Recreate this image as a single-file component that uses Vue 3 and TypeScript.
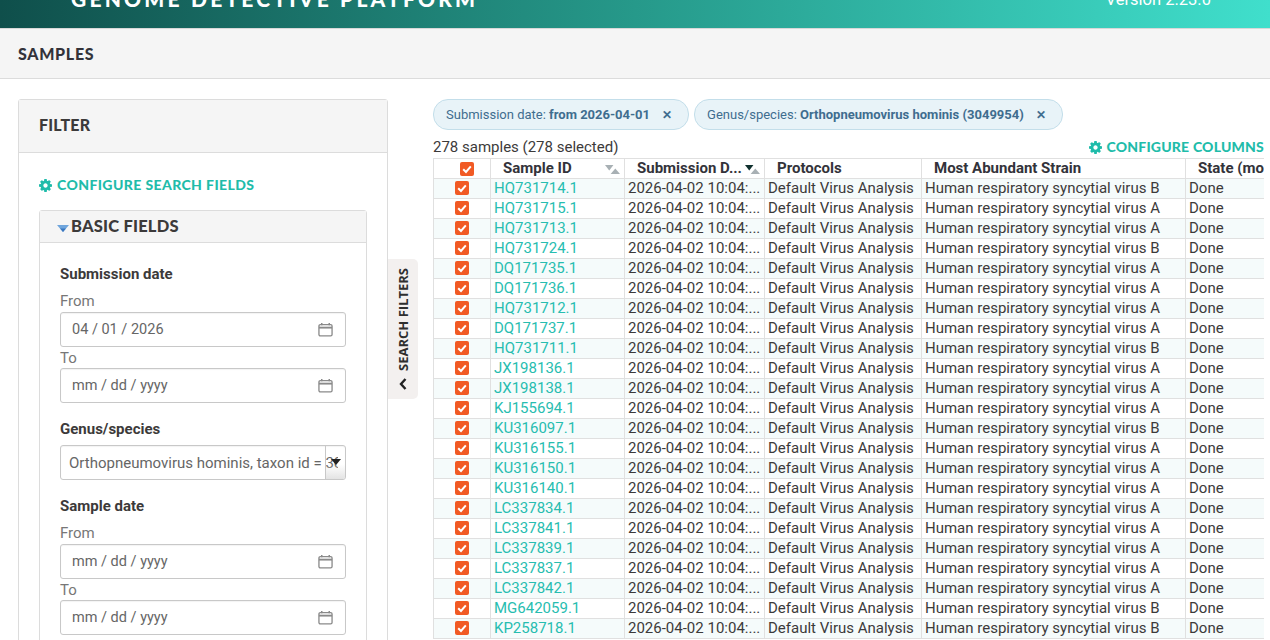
<script setup lang="ts">
interface Row { id: string; strain: string }
const raw: [string, string][] = [
  ['HQ731714.1','B'],['HQ731715.1','A'],['HQ731713.1','A'],['HQ731724.1','B'],['DQ171735.1','A'],['DQ171736.1','A'],
  ['HQ731712.1','A'],['DQ171737.1','A'],['HQ731711.1','B'],['JX198136.1','A'],['JX198138.1','A'],['KJ155694.1','A'],
  ['KU316097.1','B'],['KU316155.1','A'],['KU316150.1','A'],['KU316140.1','A'],['LC337834.1','A'],['LC337841.1','A'],
  ['LC337839.1','A'],['LC337837.1','A'],['LC337842.1','A'],['MG642059.1','B'],['KP258718.1','B'],
]
const rows: Row[] = raw.map(([id, s]) => ({ id, strain: 'Human respiratory syncytial virus ' + s }))
const cog = 'M1152 896q0-106-75-181t-181-75-181 75-75 181 75 181 181 75 181-75 75-181zm512-109v222q0 12-8 23t-20 13l-185 28q-19 54-39 91 35 50 107 138 10 12 10 25t-9 23q-27 37-99 108t-94 71q-12 0-26-9l-138-108q-44 23-91 38-16 136-29 186-7 28-36 28h-222q-14 0-24.5-8.5t-11.5-21.5l-28-184q-49-16-90-37l-141 107q-10 9-25 9-14 0-25-11-126-114-165-168-7-10-7-23 0-12 8-23 15-21 51-66.5t54-70.5q-27-50-41-99l-183-27q-13-2-21-12.5t-8-23.5v-222q0-12 8-23t19-13l186-28q14-46 39-92-40-57-107-138-10-12-10-24 0-10 9-23 26-36 98.5-107.5t94.5-71.5q13 0 26 10l138 107q44-23 91-38 16-136 29-186 7-28 36-28h222q14 0 24.5 8.5t11.5 21.5l28 184q49 16 90 37l142-107q9-9 24-9 13 0 25 10 129 119 165 170 7 8 7 22 0 12-8 23-15 21-51 66.5t-54 70.5q26 50 41 98l183 28q13 2 21 12.5t8 23.5z'
</script>

<template>
  <div class="page">
    <header class="topbar">
      <div class="brand">GENOME DETECTIVE PLATFORM</div>
      <div class="version">Version 2.23.0</div>
    </header>
    <div class="pagehead"><h1>SAMPLES</h1></div>
    <main class="content">
      <aside class="filter">
        <div class="filter-head">FILTER</div>
        <div class="filter-body">
          <a class="config">
            <svg class="cog" viewBox="128 128 1536 1536"><path :d="cog" fill="currentColor" /></svg>
            CONFIGURE SEARCH FIELDS
          </a>
          <section class="basic">
            <div class="basic-head">
              <svg class="caret" viewBox="0 0 12 7"><path d="M0 0h12L6 7z" fill="#6fa5dc" /><path d="M3 3.5h6L6 7z" fill="#3b78c0" /></svg>
              BASIC FIELDS
            </div>
            <div class="basic-body">
              <div class="field-title first">Submission date</div>
              <div class="sub">From</div>
              <div class="date-input">
                <span>04 / 01 / 2026</span>
                <svg class="cal" viewBox="0 0 16 16"><path d="M4 1v2.5M12 1v2.5" stroke="#8a8a8a" stroke-width="1.6" fill="none" /><rect x="1" y="2.8" width="14" height="12" rx="1.5" fill="none" stroke="#8a8a8a" stroke-width="1.4" /><path d="M1 6h14" stroke="#8a8a8a" stroke-width="2" /></svg>
              </div>
              <div class="sub to">To</div>
              <div class="date-input">
                <span>mm / dd / yyyy</span>
                <svg class="cal" viewBox="0 0 16 16"><path d="M4 1v2.5M12 1v2.5" stroke="#8a8a8a" stroke-width="1.6" fill="none" /><rect x="1" y="2.8" width="14" height="12" rx="1.5" fill="none" stroke="#8a8a8a" stroke-width="1.4" /><path d="M1 6h14" stroke="#8a8a8a" stroke-width="2" /></svg>
              </div>
              <div class="field-title genus">Genus/species</div>
              <div class="select">
                <span class="select-text">Orthopneumovirus hominis, taxon id = 3049954</span>
                <span class="select-btn"><svg viewBox="0 0 10 6"><path d="M0 0h10L5 6z" fill="#222" /></svg></span>
              </div>
              <div class="field-title sample">Sample date</div>
              <div class="sub">From</div>
              <div class="date-input">
                <span>mm / dd / yyyy</span>
                <svg class="cal" viewBox="0 0 16 16"><path d="M4 1v2.5M12 1v2.5" stroke="#8a8a8a" stroke-width="1.6" fill="none" /><rect x="1" y="2.8" width="14" height="12" rx="1.5" fill="none" stroke="#8a8a8a" stroke-width="1.4" /><path d="M1 6h14" stroke="#8a8a8a" stroke-width="2" /></svg>
              </div>
              <div class="sub to">To</div>
              <div class="date-input">
                <span>mm / dd / yyyy</span>
                <svg class="cal" viewBox="0 0 16 16"><path d="M4 1v2.5M12 1v2.5" stroke="#8a8a8a" stroke-width="1.6" fill="none" /><rect x="1" y="2.8" width="14" height="12" rx="1.5" fill="none" stroke="#8a8a8a" stroke-width="1.4" /><path d="M1 6h14" stroke="#8a8a8a" stroke-width="2" /></svg>
              </div>
            </div>
          </section>
        </div>
      </aside>

      <div class="toggle-col">
        <button class="toggle">
          <span class="toggle-inner">
            <svg class="chev" viewBox="0 0 12 8"><path d="M1 6.500 6 2l5 4.500" fill="none" stroke="#222" stroke-width="2.400" /></svg>
            SEARCH FILTERS
          </span>
        </button>
      </div>

      <section class="results">
        <div class="chips">
          <span class="chip">Submission date: <b>from 2026-04-01</b><i class="x">✕</i></span>
          <span class="chip">Genus/species: <b>Orthopneumovirus hominis (3049954)</b><i class="x">✕</i></span>
        </div>
        <div class="summary">
          <span>278 samples (278 selected)</span>
          <a class="config cols">
            <svg class="cog" viewBox="128 128 1536 1536"><path :d="cog" fill="currentColor" /></svg>
            CONFIGURE COLUMNS
          </a>
        </div>
        <div class="table-wrap">
          <table>
            <colgroup>
              <col class="w1" /><col class="w2" /><col class="w3" />
              <col class="w4" /><col class="w5" /><col class="w6" />
            </colgroup>
            <thead>
              <tr>
                <th class="c-check"><span class="check head-check"><svg viewBox="0 0 14 14"><path d="M3.200 7.200 6 10l4.800-5.600" fill="none" stroke="#fff" stroke-width="2" /></svg></span></th>
                <th class="h-id">Sample ID
                  <svg class="sort" viewBox="0 0 16 10" preserveAspectRatio="none"><path d="M0 0h9L4.500 6z" fill="#a8b0b4" /><path d="M6 10h10l-5-6z" fill="#a8b0b4" /></svg>
                </th>
                <th class="h-sub">Submission D...
                  <svg class="sort" viewBox="0 0 16 10" preserveAspectRatio="none"><path d="M6 10h10l-5-6z" fill="#a8b0b4" /><path d="M0 0h9L4.500 6z" fill="#10302e" /></svg>
                </th>
                <th class="h-p">Protocols</th>
                <th class="h-p">Most Abundant Strain</th>
                <th class="h-p state">State (mo</th>
              </tr>
            </thead>
            <tbody>
              <tr v-for="r in rows" :key="r.id">
                <td class="c-check"><span class="check"><svg viewBox="0 0 14 14"><path d="M3.200 7.200 6 10l4.800-5.600" fill="none" stroke="#fff" stroke-width="2" /></svg></span></td>
                <td class="link">{{ r.id }}</td>
                <td>2026-04-02 10:04:...</td>
                <td>Default Virus Analysis</td>
                <td>{{ r.strain }}</td>
                <td>Done</td>
              </tr>
            </tbody>
          </table>
        </div>
      </section>
    </main>
  </div>
</template>

<style>
html, body { margin: 0; overflow: hidden; background: #fff; }
</style>

<style scoped>
.page {
  height: 640px;
  width: 1270px;
  overflow: hidden;
  font-family: Roboto, "Liberation Sans", sans-serif;
  font-size: 15px;
  color: #3c3a3a;
}
.topbar {
  height: 29px;
  box-sizing: border-box;
  background: linear-gradient(to right, #0f4f4b 0%, #26998a 50%, #40dfcc 100%);
  border-bottom: 1px solid #d8d8d8;
  display: flex;
  justify-content: space-between;
  align-items: flex-end;
  overflow: hidden;
  padding: 0 59px 0 71px;
  color: #fff;
}
.brand {
  font-family: Lato, sans-serif;
  font-weight: 900;
  font-size: 21px;
  letter-spacing: 3.200px;
  line-height: 20px;
  margin-bottom: 19px;
  white-space: nowrap;
}
.version {
  font-size: 16.500px;
  line-height: 20px;
  margin-bottom: 18px;
  white-space: nowrap;
}
.pagehead {
  height: 50px;
  box-sizing: border-box;
  background: #f5f5f5;
  border-bottom: 1px solid #dcdcdc;
  display: flex;
  align-items: center;
  padding-left: 18px;
}
h1 {
  margin: 0;
  font-family: Lato, sans-serif;
  font-weight: 900;
  font-size: 16px;
  letter-spacing: 0.700px;
  color: #33333a;
}
.content {
  display: flex;
  align-items: flex-start;
  padding: 20px 0 0 18px;
}
.filter {
  width: 370px;
  box-sizing: border-box;
  flex: none;
  height: 620px;
  border: 1px solid #dcdcdc;
  border-radius: 3px 3px 0 0;
}
.filter-head {
  height: 53px;
  box-sizing: border-box;
  background: #f5f5f5;
  border-bottom: 1px solid #dcdcdc;
  display: flex;
  align-items: center;
  padding: 0 0 3px 20px;
  font-family: Lato, sans-serif;
  font-weight: 900;
  font-size: 16px;
  letter-spacing: 0.200px;
  color: #3c3a3a;
}
.filter-body { padding: 22px 20px 0; }
.config {
  display: flex;
  align-items: center;
  gap: 5px;
  color: #1fbcaa;
  font-family: Lato, sans-serif;
  font-weight: 900;
  font-size: 14px;
  line-height: 20px;
  letter-spacing: 0.400px;
  white-space: nowrap;
}
.cog { width: 13px; height: 13px; flex: none; }
.basic {
  margin-top: 15px;
  border: 1px solid #dcdcdc;
  border-radius: 3px 3px 0 0;
  height: 460px;
}
.basic-head {
  height: 32px;
  box-sizing: border-box;
  background: #f5f5f5;
  border-bottom: 1px solid #dcdcdc;
  display: flex;
  align-items: center;
  padding: 0 0 2px 17px;
  gap: 2px;
  font-family: Lato, sans-serif;
  font-weight: 900;
  font-size: 16.500px;
  letter-spacing: 0.200px;
  color: #3c3a3a;
}
.caret { width: 12px; height: 7px; margin-top: 6px; }
.basic-body { padding: 0 20px; }
.field-title { font-weight: 700; font-size: 15px; line-height: 20px; color: #3c3a3a; }
.field-title.first { margin-top: 21px; }
.field-title.genus { margin-top: 16px; margin-bottom: 6px; }
.field-title.sample { margin-top: 16px; }
.sub { color: #777; font-size: 15px; line-height: 20px; margin-top: 7px; margin-bottom: 1px; }
.sub.to { margin-top: 1px; margin-bottom: 0; }
.date-input, .select {
  height: 35px;
  box-sizing: border-box;
  border: 1px solid #c8c8c8;
  border-radius: 3px;
  box-shadow: inset 0 1px 1px rgba(0,0,0,.05);
  display: flex;
  align-items: center;
  color: #666;
}
.date-input { font-size: 14.500px; justify-content: space-between; padding: 0 12px 0 11px; }
.cal { width: 15px; height: 15px; }
.select { font-size: 15px; position: relative; overflow: hidden; padding-left: 8px; }
.select-text { white-space: nowrap; flex: none; width: 269px; overflow: hidden; }
.select-btn {
  position: absolute;
  right: 0; top: 0; bottom: 0;
  width: 20px;
  box-sizing: border-box;
  background: linear-gradient(to bottom, rgba(255,255,255,0) 55%, rgba(224,224,224,.9));
  border-left: 1px solid #c8c8c8;
  display: flex;
  align-items: center;
  justify-content: center;
}
.select-btn svg { width: 10px; height: 6px; margin-top: -1px; }
.toggle-col { width: 45px; flex: none; padding-top: 160px; }
.toggle {
  display: block;
  width: 30px;
  height: 140px;
  padding: 0;
  border: 0;
  background: #f3f0ef;
  border-radius: 0 5px 5px 0;
  position: relative;
}
.toggle-inner {
  position: absolute;
  left: 50%;
  top: 50%;
  transform: translate(-50%, -50%) rotate(-90deg);
  display: flex;
  align-items: center;
  gap: 7px;
  white-space: nowrap;
  font-family: "Open Sans", sans-serif;
  font-weight: 700;
  font-size: 13px;
  color: #2e2e2e;
}
.chev { width: 12px; height: 8px; flex: none; }
.results { width: 837px; flex: none; }
.chips { display: flex; gap: 5px; }
.chip {
  display: inline-flex;
  align-items: center;
  height: 31px;
  box-sizing: border-box;
  padding: 0 16px 0 12px;
  background: #e8f3f8;
  border: 1px solid #c3deea;
  border-radius: 15px;
  color: #3f6d8f;
  font-size: 13px;
  white-space: pre;
}
.chip b { font-weight: 700; }
.x { font-style: normal; font-weight: 700; font-size: 12px; margin-left: 12px; color: #3f6d8f; }
.summary {
  display: flex;
  justify-content: space-between;
  align-items: flex-end;
  width: 831px;
  height: 27px;
  margin-bottom: 1px;
  font-size: 15px;
  line-height: 20px;
  color: #3c3a3a;
}
.config.cols { margin: 0; letter-spacing: 0.200px; }
.table-wrap { width: 831px; overflow: hidden; }
table {
  border-collapse: collapse;
  table-layout: fixed;
  width: 852px;
}
.w1 { width: 57px; }
.w2 { width: 134px; }
.w3 { width: 140px; }
.w4 { width: 157px; }
.w5 { width: 264px; }
.w6 { width: 100px; }
th, td {
  border: 1px solid #e0e0e0;
  height: 20px;
  box-sizing: border-box;
  padding: 0 3px;
  line-height: 19px;
  white-space: nowrap;
  overflow: hidden;
  font-size: 15px;
}
th { position: relative; text-align: left; font-weight: 700; color: #33333a; background: #fff; }
.h-id { padding-left: 12px; }
.h-sub { padding-left: 12px; }
.h-p { padding-left: 12px; }
tbody tr:nth-child(odd) td { background: #f5fbfb; }
.link { color: #27bdb0; }
.c-check { padding: 0; text-align: center; }
.check {
  display: inline-block;
  width: 14px;
  height: 14px;
  background: #f15a24;
  border-radius: 2px;
  vertical-align: -2px;
  margin-right: 1px;
}
.head-check { margin-left: 10px; margin-right: 0; position: relative; top: 1px; }
.check svg { display: block; width: 14px; height: 14px; }
.sort { position: absolute; right: 4px; top: 6px; width: 15px; height: 9px; }
</style>
